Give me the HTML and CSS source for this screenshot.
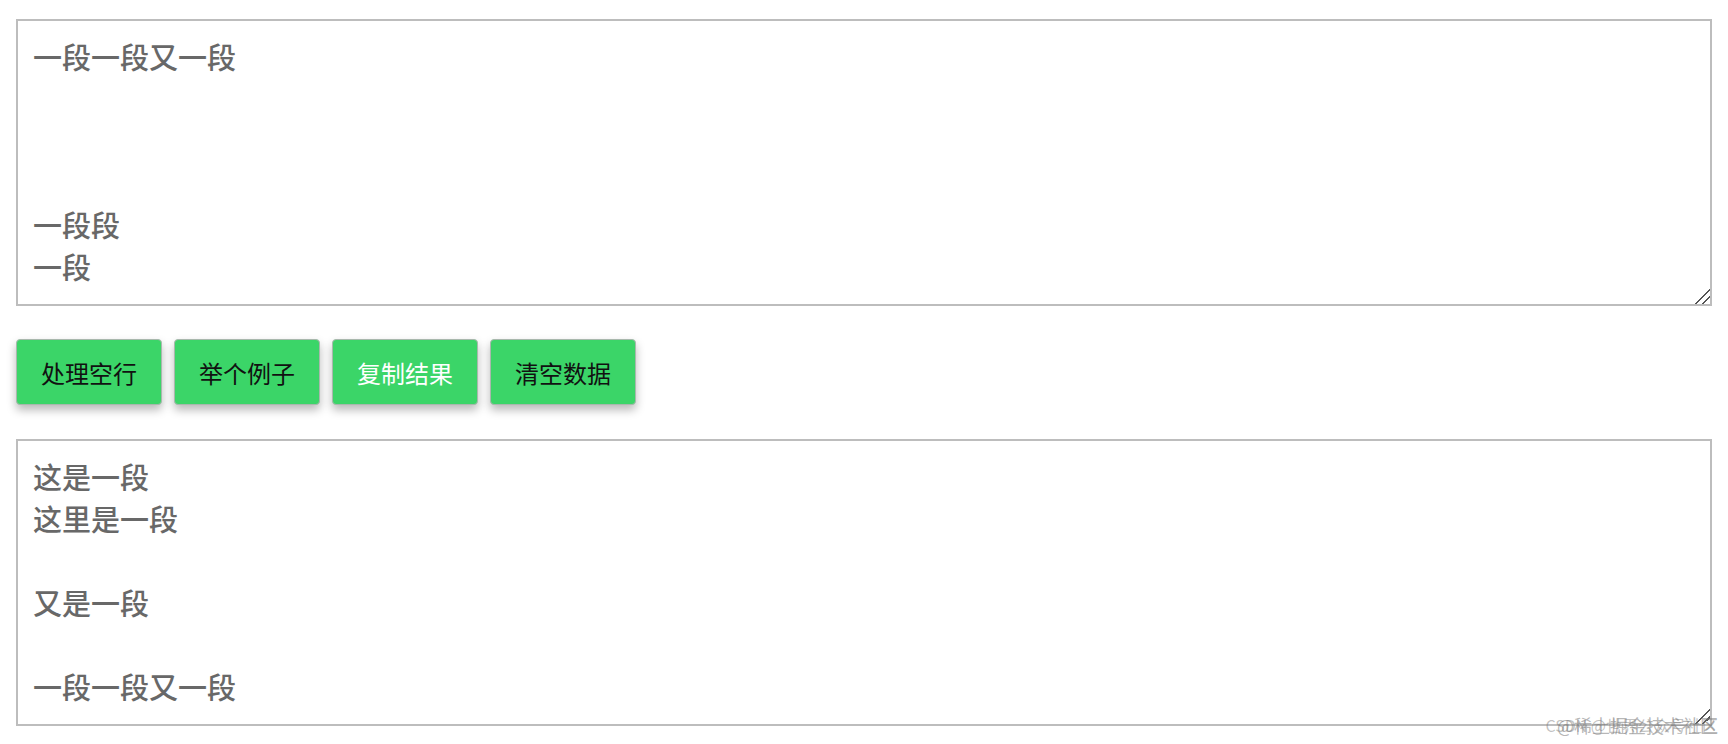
FILE: index.html
```html
<!DOCTYPE html>
<html lang="zh-CN">
<head>
<meta charset="utf-8">
<title>处理空行</title>
<link rel="stylesheet" href="styles.css">
</head>
<body>
<div class="page">
<textarea class="box">一段一段又一段



一段段
一段</textarea>
<div class="actions">
<button class="btn">处理空行</button>
<button class="btn">举个例子</button>
<button class="btn btn-light">复制结果</button>
<button class="btn">清空数据</button>
</div>
<textarea class="box">这是一段
这里是一段

又是一段

一段一段又一段</textarea>
</div>
<div class="watermark"><span class="wm-a">@稀土掘金技术社区</span><span class="wm-b">CSDN @世界公众号社区</span></div>
</body>
</html>
```
FILE: styles.css
```css
html, body {
  margin: 0;
  padding: 0;
  background: #ffffff;
}
body {
  font-family: "Noto Sans CJK SC", "Noto Sans", sans-serif;
}
.page {
  display: flex;
  flex-direction: column;
  padding: 19px 16px 0 16px;
}
.box {
  display: block;
  width: 100%;
  height: 287px;
  box-sizing: border-box;
  border: 2px solid #bdbdbd;
  padding: 14px 15px;
  margin: 0;
  font-family: "Noto Sans CJK SC", sans-serif;
  font-size: 29px;
  line-height: 42px;
  font-weight: 500;
  color: #686868;
  background: #fff;
  outline: none;
  overflow: hidden;
}
.box::-webkit-resizer {
  background: linear-gradient(135deg,
    transparent 0%, transparent 48%,
    #555 48%, #555 56%,
    transparent 56%, transparent 72%,
    #555 72%, #555 80%,
    transparent 80%);
}
.actions {
  display: flex;
  gap: 12px;
  padding: 33px 0 34px 0;
}
.btn {
  width: 146px;
  height: 66px;
  box-sizing: border-box;
  margin: 0;
  padding: 0;
  border: 1px solid #a9b8ad;
  border-radius: 4px;
  background: #3bd568;
  color: #111;
  font-family: "Noto Sans CJK SC", sans-serif;
  font-size: 24px;
  font-weight: 400;
  box-shadow: 0 5px 10px rgba(0, 0, 0, 0.28);
  cursor: pointer;
}
.btn-light {
  color: #ffffff;
}
.watermark {
  position: absolute;
  right: 10px;
  top: 712px;
  height: 26px;
  width: 160px;
  font-family: "Noto Sans CJK SC", sans-serif;
  font-size: 18px;
  line-height: 26px;
  color: rgba(120, 120, 120, 0.55);
  white-space: nowrap;
}
.wm-a, .wm-b {
  position: absolute;
  right: 0;
  top: 0;
}
.wm-b {
  font-size: 16px;
  color: rgba(120, 120, 120, 0.45);
}
```
